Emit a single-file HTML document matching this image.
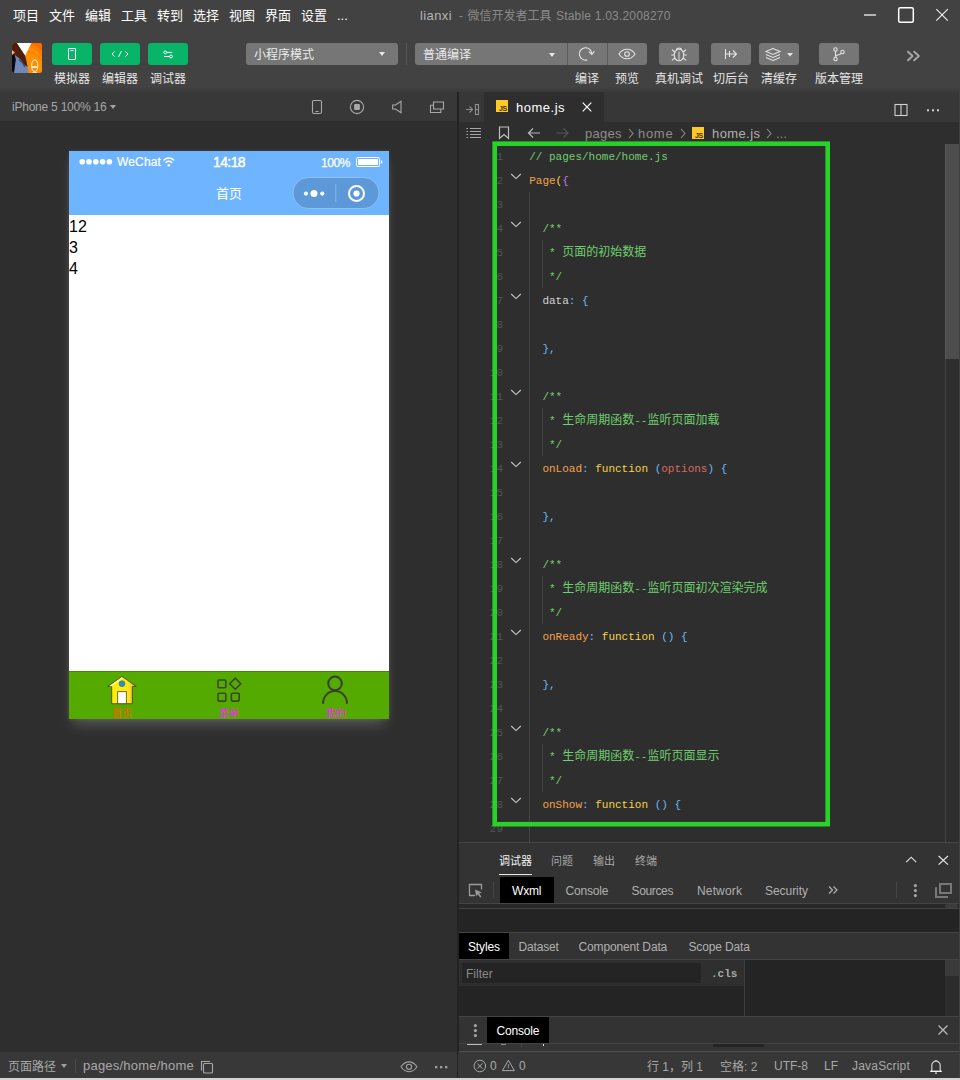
<!DOCTYPE html>
<html lang="zh-CN">
<head>
<meta charset="utf-8">
<title>微信开发者工具</title>
<style>
*{box-sizing:border-box;margin:0;padding:0}
html,body{width:960px;height:1080px;overflow:hidden;background:#2e2e2e}
body{position:relative;font-family:"Liberation Sans","Noto Sans CJK SC",sans-serif;font-size:12px;color:#ccc;-webkit-font-smoothing:antialiased}
.a{position:absolute;white-space:nowrap}
svg{position:absolute;overflow:visible}
/* ---------- top bar ---------- */
#top{left:0;top:0;width:960px;height:92px;background:#424242}
.menu{top:8px;font-size:13px;color:#fff;line-height:16px}
.gbtn{top:43px;width:40px;height:22px;background:#07b468;border-radius:3px}
.tbtn{top:43px;width:40px;height:22px;background:#767676;border-radius:3px}
.lbl{top:71px;font-size:12px;color:#e6e6e6;line-height:16px;text-align:center;width:60px}
/* ---------- simulator ---------- */
#simbar{left:0;top:92px;width:457px;height:29px;background:#383838}
#phone{left:69px;top:151px;width:320px;height:568px;background:#fff;box-shadow:0 0 4px rgba(255,255,255,.13),0 9px 13px -4px rgba(255,255,255,.21)}
#nav{left:0;top:0;width:320px;height:64px;background:#6eb4ff}
#tab{left:0;top:520px;width:320px;height:48px;background:#55aa00;border-top:1px solid #3f8a00}
/* ---------- editor ---------- */
#split{left:457px;top:92px;width:2px;height:960px;background:#232323}
.code{left:529.200px;margin-top:1px;font-family:"Liberation Mono","Noto Sans CJK SC",monospace;font-size:11px;line-height:24px;height:24px;white-space:pre;letter-spacing:0}
.code b{font-weight:normal;font-size:12px;font-family:"Liberation Sans","Noto Sans CJK SC",sans-serif;line-height:0;position:relative;top:0px}
.ln{left:470px;width:33px;margin-top:1px;text-align:right;font-family:"Liberation Mono",monospace;font-size:11px;line-height:24px;height:24px;color:#555}
.c{color:#6fce6f}.o{color:#f6a04a}.y{color:#f8d347}.b{color:#6dbaf4}.w{color:#d4d4d4}.r{color:#d9695f}.p{color:#c678dd}
</style>
</head>
<body>
<!-- TOP -->
<div id="top" class="a"></div>
<div class="a" style="left:0;top:87px;width:960px;height:5px;background:linear-gradient(#424242,#393939)"></div>
<span class="a menu" style="left:13px">项目</span>
<span class="a menu" style="left:49px">文件</span>
<span class="a menu" style="left:85px">编辑</span>
<span class="a menu" style="left:121px">工具</span>
<span class="a menu" style="left:157px">转到</span>
<span class="a menu" style="left:193px">选择</span>
<span class="a menu" style="left:229px">视图</span>
<span class="a menu" style="left:265px">界面</span>
<span class="a menu" style="left:301px">设置</span>
<span class="a menu" style="left:337px">...</span>
<span class="a" style="left:420px;top:8px;font-size:13px;line-height:16px;color:#b4b4b4;letter-spacing:.4px">lianxi</span><span class="a" style="left:459px;top:8px;font-size:12px;line-height:16px;color:#8a8a8a">-</span><span class="a" style="left:467.500px;top:8px;font-size:12px;line-height:16px;color:#8a8a8a">微信开发者工具</span><span class="a" style="left:556px;top:8px;font-size:12px;line-height:16px;color:#8a8a8a;letter-spacing:.2px">Stable 1.03.2008270</span>
<!-- window controls -->
<svg style="left:860px;top:0" width="100" height="30" viewBox="0 0 100 30" fill="none" stroke="#e8e8e8" stroke-width="1.3">
  <path d="M4 15h12" stroke="#b4b4b4" stroke-width="2"/>
  <rect x="38.7" y="7.7" width="14.6" height="14.6" rx="1.5" stroke="#fff" stroke-width="1.5"/>
  <path d="M76.3 9.2l11.5 11.5M87.800 9.2l-11.5 11.5" stroke-width="1.1" stroke="#f4f4f4"/>
</svg>
<!-- avatar -->
<svg style="left:12px;top:43px" width="30" height="30" viewBox="0 0 30 30">
  <defs><clipPath id="avc"><rect width="30" height="30" rx="2.5"/></clipPath></defs>
  <g clip-path="url(#avc)">
    <rect width="30" height="30" fill="#ff8e00"/>
    <path d="M19.400 0H30V9.500C27 4.500 23.500 2 19 1Z" fill="#ff6a00"/>
    <path d="M17.500 4.500C23 5.500 27 8.500 30 13.500V9.500C27 4.500 23.500 2 19 1Z" fill="#ff7e00"/>
    <path d="M16 8.500C22 9.500 26.500 12.500 30 18" stroke="#e86e00" stroke-width=".6" fill="none"/>
    <path d="M4.800 0H19.400L13.100 12.800Z" fill="#fff"/>
    <path d="M1.9 30V12.2h4.6l6.6.6 1 3.2 2.400 14Z" fill="#7088ba"/>
    <path d="M7 16.500c2.500 1.500 4.500 4 6 7.500" stroke="#3c527e" stroke-width="1.600" fill="none"/>
    <path d="M0 0H4.800L13.100 12.800l1.300 5.200 1.200 6-3.600-2.800C10 17.500 8 15.500 5.500 14L3 12H0Z" fill="#4e1f0f"/>
    <path d="M0 11.800H2.600l1.200 4.700L2 30H0Z" fill="#090916"/>
    <path d="M0 7l3 2.600L0 12Z" fill="#ffb468"/>
    <ellipse cx="22.700" cy="22.700" rx="3.100" ry="5.800" fill="none" stroke="#f6ecd8" stroke-width="1.100"/>
    <path d="M19.800 24h5.800" stroke="#fff" stroke-width="1.500"/>
    <path d="M20.500 29.600h4.500" stroke="#f2e6d4" stroke-width="1"/>
  </g>
</svg>
<!-- green buttons -->
<div class="a gbtn" style="left:52px"></div>
<div class="a gbtn" style="left:100px"></div>
<div class="a gbtn" style="left:148px"></div>
<svg style="left:52px;top:43px" width="136" height="22" viewBox="0 0 136 22" fill="none" stroke="#fff" stroke-width="1">
  <rect x="16.500" y="5.500" width="7" height="11" rx=".3"/><path d="M18.500 7.500h3"/>
  <path d="M62.500 8.500L60 11l2.500 2.500M73.500 8.500L76 11l-2.500 2.500M69.500 8l-3 6"/>
  <circle cx="113.200" cy="9.400" r="1.400"/><path d="M114.800 9.400h5.400"/>
  <circle cx="119" cy="13.500" r="1.400"/><path d="M112 13.500h5.500"/>
</svg>
<span class="a lbl" style="left:42px">模拟器</span>
<span class="a lbl" style="left:90px">编辑器</span>
<span class="a lbl" style="left:138px">调试器</span>
<!-- dropdowns -->
<div class="a" style="left:246px;top:43px;width:152px;height:22px;background:#767676;border-radius:3px"></div>
<span class="a" style="left:254px;top:47px;font-size:12px;line-height:16px;color:#ececec">小程序模式</span>
<div class="a" style="left:379px;top:52px;border:3px solid transparent;border-top:4px solid #e8e8e8;border-bottom:0"></div>
<div class="a" style="left:406px;top:43px;width:1px;height:22px;background:#575757"></div>
<div class="a" style="left:415px;top:43px;width:232px;height:22px;background:#767676;border-radius:3px"></div>
<div class="a" style="left:567px;top:43px;width:1px;height:22px;background:#5c5c5c"></div>
<div class="a" style="left:607px;top:43px;width:1px;height:22px;background:#5c5c5c"></div>
<span class="a" style="left:423px;top:47px;font-size:12px;line-height:16px;color:#ececec">普通编译</span>
<div class="a" style="left:548.500px;top:52.500px;border:3px solid transparent;border-top:4px solid #e8e8e8;border-bottom:0"></div>
<svg style="left:567px;top:43px" width="80" height="22" viewBox="0 0 80 22" fill="none" stroke="#e4e4e4" stroke-width="1.100">
  <path d="M20.200 16.900A6.200 6.200 0 1 1 24.800 10.900"/><path d="M21.800 8.600l3.100 2.800 2.500-3.200"/>
  <path d="M52 11c2-3.300 5-4.800 8-4.800s6 1.500 8 4.800c-2 3.300-5 4.800-8 4.800s-6-1.500-8-4.800Z"/><circle cx="60" cy="11" r="2.300"/>
</svg>
<span class="a lbl" style="left:557px">编译</span>
<span class="a lbl" style="left:597px">预览</span>
<!-- right tool buttons -->
<div class="a tbtn" style="left:659px"></div>
<div class="a tbtn" style="left:711px"></div>
<div class="a tbtn" style="left:759px"></div>
<div class="a tbtn" style="left:819px"></div>
<svg style="left:659px;top:43px" width="200" height="22" viewBox="0 0 200 22" fill="none" stroke="#e4e4e4" stroke-width="1.100">
  <ellipse cx="20" cy="12" rx="4.800" ry="5.800"/><path d="M17.300 7a2.800 2.800 0 0 1 5.400 0"/><path d="M20 8.500v9" stroke-opacity=".7" stroke-width="1.300"/><path d="M15.200 12h-3M24.800 12h3M15.800 9l-2.800-2.300M24.200 9l2.800-2.300M15.800 15l-2.800 2.300M24.200 15l2.800 2.300"/>
  <path d="M66.500 6v10M66.500 11h11M74 7.500l3.500 3.500-3.500 3.500M70.500 8v6" />
  <path d="M107 8.500l7-3 7 3-7 3zM107 11.500l7 3 7-3M107 14.500l7 3 7-3"/>
  <path d="M128 10l3 3.500 3-3.500z" fill="#e4e4e4" stroke="none"/>
  <circle cx="176.500" cy="6.500" r="1.700"/><circle cx="176.500" cy="16" r="1.700"/><circle cx="183.500" cy="9" r="1.700"/><path d="M176.500 8.200v6.100M176.500 14c0-3 5.300-1.500 5.800-3.800"/>
</svg>
<span class="a lbl" style="left:649px">真机调试</span>
<span class="a lbl" style="left:701px">切后台</span>
<span class="a lbl" style="left:749px">清缓存</span>
<span class="a lbl" style="left:809px">版本管理</span>
<svg style="left:905px;top:49px" width="16" height="14" viewBox="0 0 16 14" fill="none" stroke="#a6a6a6" stroke-width="2" stroke-linecap="round" stroke-linejoin="round"><path d="M3 2.700l4.600 4.300-4.600 4.300M9.200 2.700l4.600 4.300-4.600 4.300"/></svg>
<!-- SIM -->
<div id="simbar" class="a"></div>
<span class="a" style="left:12px;top:99px;font-size:12px;line-height:16px;color:#a6a6a6;letter-spacing:-.23px">iPhone 5 100% 16</span>
<div class="a" style="left:109.500px;top:105px;border:3px solid transparent;border-top:4px solid #a6a6a6;border-bottom:0"></div>
<svg style="left:300px;top:93px" width="157" height="28" viewBox="0 0 157 28" fill="none" stroke="#a8a8a8" stroke-width="1.100">
  <rect x="12.500" y="7.500" width="9" height="13" rx="1.500"/><path d="M15.500 18.500h3"/>
  <circle cx="57" cy="14" r="6.600"/><rect x="54.100" y="11.100" width="5.800" height="5.800" rx="1" fill="#a8a8a8" stroke="none"/>
  <path d="M92.700 12v4h2.800l5.500 3.800v-11.600l-5.500 3.800z"/>
  <path d="M133.500 9h10v7h-10zM133.500 12.300h-3v7.200h10.300v-3.500"/>
</svg>
<div id="phone" class="a">
  <div id="nav" class="a"></div>
  <svg style="left:0;top:0" width="320" height="64" viewBox="0 0 320 64">
    <g fill="#fff"><circle cx="13.200" cy="10.700" r="2.800"/><circle cx="20" cy="10.700" r="2.800"/><circle cx="26.800" cy="10.700" r="2.800"/><circle cx="33.600" cy="10.700" r="2.800"/><circle cx="40.400" cy="10.700" r="2.800"/></g>
    <g fill="none" stroke="#fff" stroke-width="1.500" stroke-linecap="round"><path d="M95 9a7 7 0 0 1 9.600 0"/><path d="M96.900 11.500a4.200 4.200 0 0 1 5.800 0"/></g>
    <circle cx="99.800" cy="14.200" r="1.300" fill="#fff"/>
    <rect x="287.500" y="6.500" width="23" height="9" rx="1.500" fill="none" stroke="#fff" stroke-width="1"/>
    <rect x="289" y="8" width="20" height="6" rx=".500" fill="#fff"/>
    <path d="M311.800 9.300v3.400a1.700 1.700 0 0 0 0-3.400z" fill="#fff"/>
    <rect x="224" y="26.500" width="86" height="31" rx="15.500" fill="rgba(0,0,0,.15)" stroke="rgba(255,255,255,.28)" stroke-width="1"/>
    <g fill="#fff"><circle cx="237" cy="42.600" r="2.100"/><circle cx="245" cy="42.600" r="3.500"/><circle cx="253.300" cy="42.600" r="2.100"/><circle cx="287.500" cy="42.500" r="3.100"/></g>
    <path d="M266.800 33v18" stroke="rgba(255,255,255,.3)" stroke-width="1"/>
    <circle cx="287.500" cy="42.500" r="7.500" fill="none" stroke="#fff" stroke-width="2"/>
  </svg>
  <span class="a" style="left:48px;top:3px;font-size:12px;line-height:16px;color:#fff;-webkit-text-stroke:.2px #fff;letter-spacing:.15px">WeChat</span>
  <span class="a" style="left:0;width:320px;text-align:center;top:3px;font-size:14px;line-height:16px;color:#fff;-webkit-text-stroke:.45px #fff;letter-spacing:-.6px">14:18</span>
  <span class="a" style="left:252px;top:4px;font-size:12px;line-height:16px;color:#fff;-webkit-text-stroke:.25px #fff;letter-spacing:-.45px">100%</span>
  <span class="a" style="left:0;width:320px;text-align:center;top:34px;font-size:13px;line-height:18px;color:#fff">首页</span>
  <span class="a" style="left:0;top:65px;font-size:16px;line-height:21px;color:#000">12</span>
  <span class="a" style="left:0;top:86px;font-size:16px;line-height:21px;color:#000">3</span>
  <span class="a" style="left:0;top:107px;font-size:16px;line-height:21px;color:#000">4</span>
  <div id="tab" class="a"></div>
  <svg style="left:0;top:520px" width="320" height="48" viewBox="0 0 320 48">
    <defs><linearGradient id="hg" x1="0" x2="1"><stop offset="0" stop-color="#fff000"/><stop offset=".7" stop-color="#ffe81a"/><stop offset="1" stop-color="#e8b840"/></linearGradient></defs>
    <!-- house -->
    <path d="M53 5.400L38.800 15.400h3.900v17.300h20.600V15.400h3.900z" fill="url(#hg)" stroke="#4a4a18" stroke-width=".9" stroke-linejoin="round"/>
    <path d="M53 6L40.500 15.200l2 .1L53 7.500z" fill="#fff" opacity=".85"/>
    <rect x="48.700" y="20.700" width="8.600" height="12" fill="#fff" stroke="#4a4a18" stroke-width=".8"/>
    <circle cx="53" cy="12.700" r="3" fill="#1e90e0" stroke="#6a6a20" stroke-width=".5"/>
    <!-- menu -->
    <g fill="none" stroke="#38472c" stroke-width="1.600" stroke-linejoin="round">
      <rect x="149" y="9" width="7.800" height="7.800" rx="1"/><rect x="149" y="22.300" width="7.800" height="7.800" rx="1"/><rect x="162.400" y="22.300" width="7.800" height="7.800" rx="1"/>
      <path d="M166.250 7.100l5.600 5.600-5.600 5.600-5.600-5.600z"/>
    </g>
    <!-- me -->
    <g fill="none" stroke="#38402f" stroke-width="2" stroke-linecap="round"><circle cx="266" cy="12.400" r="6.800"/><path d="M254.100 32a11.900 11.900 0 0 1 23.800 0"/></g>
  </svg>
  <span class="a" style="left:0;width:106.670px;text-align:center;top:37px;margin-top:520px;font-size:10px;line-height:12px;color:#ff5a00">首页</span>
  <span class="a" style="left:106.670px;width:106.670px;text-align:center;top:37px;margin-top:520px;font-size:10px;line-height:12px;color:#ff1aff">菜单</span>
  <span class="a" style="left:213.330px;width:106.670px;text-align:center;top:37px;margin-top:520px;font-size:10px;line-height:12px;color:#ff1aff">我的</span>
</div>
<!-- EDITOR -->
<div class="a" style="left:459px;top:92px;width:501px;height:30px;background:#373737"></div>
<div class="a" style="left:484px;top:92px;width:120px;height:30px;background:#2e2e2e"></div>
<div class="a" style="left:959px;top:122px;width:1px;height:720px;background:#3c3c3c"></div>
<svg style="left:459px;top:92px" width="25" height="30" viewBox="0 0 25 30" fill="none" stroke="#8e8e8e" stroke-width="1.100"><path d="M7 17.500h6.500M10.500 14.500l3 3-3 3"/><rect x="16.500" y="12.500" width="3" height="10"/><path d="M16.500 17.500h3"/></svg>
<div class="a" style="left:496px;top:100px;width:12px;height:12px;background:#ffca28"></div>
<span class="a" style="left:499px;top:104.500px;font-size:7px;line-height:8px;font-weight:bold;color:#3a3000;letter-spacing:-.3px">JS</span>
<span class="a" style="left:516px;top:100px;font-size:13px;line-height:16px;color:#fff;letter-spacing:.5px">home.js</span>
<svg style="left:581px;top:101px" width="12" height="12" viewBox="0 0 12 12" fill="none" stroke="#fff" stroke-width="1.200"><path d="M1.700 1.700l8.600 8.600M10.300 1.700l-8.600 8.600"/></svg>
<svg style="left:890px;top:100px" width="60" height="20" viewBox="0 0 60 20" fill="none" stroke="#d0d0d0" stroke-width="1.100"><rect x="5" y="4.500" width="12" height="11"/><path d="M11 4.500v11"/><g fill="#d0d0d0" stroke="none"><rect x="37" y="9.300" width="2" height="2"/><rect x="42" y="9.300" width="2" height="2"/><rect x="47" y="9.300" width="2" height="2"/></g></svg>
<svg style="left:459px;top:122px" width="120" height="22" viewBox="0 0 120 22" fill="none" stroke="#b0b0b0" stroke-width="1.100">
<g stroke="#a8a8a8"><path d="M11 6.500h11M11 9.500h11M11 12.500h11M11 15.500h11"/><path d="M7.500 6.500h1.500M7.500 9.500h1.500M7.500 12.500h1.500M7.500 15.500h1.500"/></g>
<path d="M40.500 5v11.500l4.500-4 4.500 4V5z" stroke="#c0c0c0" stroke-width="1.200"/>
<path d="M81 11h-11.500M74 6.500l-4.500 4.500 4.500 4.500" stroke="#b8b8b8" stroke-width="1.200"/>
<path d="M97.500 11h11.500M104.500 6.500l4.500 4.500-4.500 4.500" stroke="#555" stroke-width="1.200"/>
</svg>
<span class="a" style="left:585px;top:126px;font-size:13px;line-height:16px;color:#8c8c8c;letter-spacing:.3px">pages</span>
<span class="a" style="left:638px;top:126px;font-size:13px;line-height:16px;color:#8c8c8c;letter-spacing:.7px">home</span>
<span class="a" style="left:712px;top:126px;font-size:13px;line-height:16px;color:#b0b0b0;letter-spacing:.4px">home.js</span>
<span class="a" style="left:776px;top:126px;font-size:13px;line-height:16px;color:#8c8c8c">...</span>
<svg style="left:620px;top:122px" width="160" height="22" viewBox="0 0 160 22" fill="none" stroke="#8c8c8c" stroke-width="1.100"><path d="M9 7l4 4.500-4 4.500M61 7l4 4.500-4 4.500M147 7l4 4.500-4 4.500"/></svg>
<div class="a" style="left:692px;top:127px;width:12px;height:12px;background:#ffca28"></div>
<span class="a" style="left:695px;top:131.500px;font-size:7px;line-height:8px;font-weight:bold;color:#3a3000;letter-spacing:-.3px">JS</span>
<div class="a" style="left:529px;top:192px;width:1px;height:650px;background:#454545"></div>
<div class="a" style="left:542px;top:240px;width:1px;height:48px;background:#454545"></div>
<div class="a" style="left:542px;top:408px;width:1px;height:48px;background:#454545"></div>
<div class="a" style="left:542px;top:576px;width:1px;height:48px;background:#454545"></div>
<div class="a" style="left:542px;top:744px;width:1px;height:48px;background:#454545"></div>
<div class="a" style="left:945px;top:144px;width:1px;height:698px;background:#424242"></div>
<div class="a" style="left:945px;top:144px;width:14px;height:215px;background:#4d4d4d;border-left:1px solid #585858"></div>
<span class="a ln" style="top:144px">1</span>
<span class="a code" style="top:144px"><span class="c">// pages/home/home.js</span></span>
<span class="a ln" style="top:168px">2</span>
<span class="a code" style="top:168px"><span class="o">Page</span><span class="y">(</span><span class="p">{</span></span>
<svg style="left:510px;top:173px" width="12" height="8" viewBox="0 0 12 8" fill="none" stroke="#c8c8c8" stroke-width="1.050"><path d="M1.200 1l4.800 4.600 4.800-4.600"/></svg>
<span class="a ln" style="top:192px">3</span>
<span class="a ln" style="top:216px">4</span>
<span class="a code" style="top:216px">  <span class="c">/**</span></span>
<svg style="left:510px;top:221px" width="12" height="8" viewBox="0 0 12 8" fill="none" stroke="#c8c8c8" stroke-width="1.050"><path d="M1.200 1l4.800 4.600 4.800-4.600"/></svg>
<span class="a ln" style="top:240px">5</span>
<span class="a code" style="top:240px">   <span class="c">* <b>页面的初始数据</b></span></span>
<span class="a ln" style="top:264px">6</span>
<span class="a code" style="top:264px">   <span class="c">*/</span></span>
<span class="a ln" style="top:288px">7</span>
<span class="a code" style="top:288px">  <span class="w">data</span><span class="b">: {</span></span>
<svg style="left:510px;top:293px" width="12" height="8" viewBox="0 0 12 8" fill="none" stroke="#c8c8c8" stroke-width="1.050"><path d="M1.200 1l4.800 4.600 4.800-4.600"/></svg>
<span class="a ln" style="top:312px">8</span>
<span class="a ln" style="top:336px">9</span>
<span class="a code" style="top:336px">  <span class="b">},</span></span>
<span class="a ln" style="top:360px">10</span>
<span class="a ln" style="top:384px">11</span>
<span class="a code" style="top:384px">  <span class="c">/**</span></span>
<svg style="left:510px;top:389px" width="12" height="8" viewBox="0 0 12 8" fill="none" stroke="#c8c8c8" stroke-width="1.050"><path d="M1.200 1l4.800 4.600 4.800-4.600"/></svg>
<span class="a ln" style="top:408px">12</span>
<span class="a code" style="top:408px">   <span class="c">* <b>生命周期函数</b>--<b>监听页面加载</b></span></span>
<span class="a ln" style="top:432px">13</span>
<span class="a code" style="top:432px">   <span class="c">*/</span></span>
<span class="a ln" style="top:456px">14</span>
<span class="a code" style="top:456px">  <span class="o">onLoad</span><span class="b">: </span><span class="y">function</span> <span class="b">(</span><span class="r">options</span><span class="b">) {</span></span>
<svg style="left:510px;top:461px" width="12" height="8" viewBox="0 0 12 8" fill="none" stroke="#c8c8c8" stroke-width="1.050"><path d="M1.200 1l4.800 4.600 4.800-4.600"/></svg>
<span class="a ln" style="top:480px">15</span>
<span class="a ln" style="top:504px">16</span>
<span class="a code" style="top:504px">  <span class="b">},</span></span>
<span class="a ln" style="top:528px">17</span>
<span class="a ln" style="top:552px">18</span>
<span class="a code" style="top:552px">  <span class="c">/**</span></span>
<svg style="left:510px;top:557px" width="12" height="8" viewBox="0 0 12 8" fill="none" stroke="#c8c8c8" stroke-width="1.050"><path d="M1.200 1l4.800 4.600 4.800-4.600"/></svg>
<span class="a ln" style="top:576px">19</span>
<span class="a code" style="top:576px">   <span class="c">* <b>生命周期函数</b>--<b>监听页面初次渲染完成</b></span></span>
<span class="a ln" style="top:600px">20</span>
<span class="a code" style="top:600px">   <span class="c">*/</span></span>
<span class="a ln" style="top:624px">21</span>
<span class="a code" style="top:624px">  <span class="o">onReady</span><span class="b">: </span><span class="y">function</span> <span class="b">() {</span></span>
<svg style="left:510px;top:629px" width="12" height="8" viewBox="0 0 12 8" fill="none" stroke="#c8c8c8" stroke-width="1.050"><path d="M1.200 1l4.800 4.600 4.800-4.600"/></svg>
<span class="a ln" style="top:648px">22</span>
<span class="a ln" style="top:672px">23</span>
<span class="a code" style="top:672px">  <span class="b">},</span></span>
<span class="a ln" style="top:696px">24</span>
<span class="a ln" style="top:720px">25</span>
<span class="a code" style="top:720px">  <span class="c">/**</span></span>
<svg style="left:510px;top:725px" width="12" height="8" viewBox="0 0 12 8" fill="none" stroke="#c8c8c8" stroke-width="1.050"><path d="M1.200 1l4.800 4.600 4.800-4.600"/></svg>
<span class="a ln" style="top:744px">26</span>
<span class="a code" style="top:744px">   <span class="c">* <b>生命周期函数</b>--<b>监听页面显示</b></span></span>
<span class="a ln" style="top:768px">27</span>
<span class="a code" style="top:768px">   <span class="c">*/</span></span>
<span class="a ln" style="top:792px">28</span>
<span class="a code" style="top:792px">  <span class="o">onShow</span><span class="b">: </span><span class="y">function</span> <span class="b">() {</span></span>
<svg style="left:510px;top:797px" width="12" height="8" viewBox="0 0 12 8" fill="none" stroke="#c8c8c8" stroke-width="1.050"><path d="M1.200 1l4.800 4.600 4.800-4.600"/></svg>
<span class="a ln" style="top:816px">29</span>
<svg style="left:0;top:0" width="960" height="1080" viewBox="0 0 960 1080" fill="none"><rect x="494.700" y="143.700" width="333" height="680.500" stroke="#28d228" stroke-width="4.600"/></svg>
<div class="a" style="left:459px;top:842px;width:501px;height:1px;background:#454545"></div>
<!-- DEBUGGER -->
<div class="a" style="left:459px;top:843px;width:501px;height:32px;background:#333"></div>
<div class="a" style="left:459px;top:875px;width:501px;height:29px;background:#333;border-bottom:1px solid #444"></div>
<div class="a" style="left:459px;top:904px;width:501px;height:4px;background:#282828"></div>
<div class="a" style="left:459px;top:908px;width:501px;height:1px;background:#444"></div>
<div class="a" style="left:459px;top:909px;width:501px;height:23px;background:#242424"></div>
<div class="a" style="left:945px;top:904px;width:13px;height:4px;background:#3c3c3c;border-radius:2px"></div>
<div class="a" style="left:459px;top:932px;width:501px;height:1px;background:#444"></div>
<div class="a" style="left:459px;top:933px;width:501px;height:26px;background:#333"></div>
<div class="a" style="left:459px;top:959px;width:501px;height:1px;background:#444"></div>
<div class="a" style="left:459px;top:960px;width:501px;height:56px;background:#242424"></div>
<div class="a" style="left:459px;top:960px;width:285px;height:26px;background:#2f2f2f"></div>
<div class="a" style="left:462px;top:963px;width:239px;height:20px;background:#242424"></div>
<div class="a" style="left:744px;top:960px;width:1px;height:56px;background:#3e3e3e"></div>
<div class="a" style="left:945px;top:960px;width:14px;height:56px;background:#2c2c2c"></div>
<div class="a" style="left:945px;top:960px;width:14px;height:16px;background:#3a3a3a"></div>
<div class="a" style="left:459px;top:1016px;width:501px;height:1px;background:#444"></div>
<div class="a" style="left:459px;top:1017px;width:501px;height:26px;background:#333"></div>
<div class="a" style="left:459px;top:1043px;width:501px;height:1px;background:#444"></div>
<div class="a" style="left:459px;top:1044px;width:501px;height:7px;background:#343434"></div><div class="a" style="left:467px;top:1044px;width:15px;height:1px;background:#bcbcbc"></div><div class="a" style="left:501px;top:1044px;width:5px;height:1px;background:#8a8a8a"></div><div class="a" style="left:543px;top:1044px;width:1px;height:2px;background:#e0e0e0"></div><div class="a" style="left:521px;top:1044px;width:1px;height:3px;background:#454545"></div>
<div class="a" style="left:713px;top:1044px;width:51px;height:3px;background:#242424"></div>
<div class="a" style="left:459px;top:1051px;width:501px;height:1px;background:#505050"></div>
<span class="a" style="left:499px;top:853px;font-size:11px;line-height:16px;color:#f0f0f0">调试器</span>
<span class="a" style="left:551px;top:853px;font-size:11px;line-height:16px;color:#a8a8a8">问题</span>
<span class="a" style="left:593px;top:853px;font-size:11px;line-height:16px;color:#a8a8a8">输出</span>
<span class="a" style="left:635px;top:853px;font-size:11px;line-height:16px;color:#a8a8a8">终端</span>
<div class="a" style="left:499px;top:874px;width:33px;height:1px;background:#e8e8e8"></div>
<svg style="left:900px;top:850px" width="56" height="20" viewBox="0 0 56 20" fill="none" stroke="#e6e6e6" stroke-width="1.150"><path d="M6.200 12.200l5-5 5 5"/><path d="M38.600 6l9.400 8.600M48 6l-9.400 8.600"/></svg>
<svg style="left:467px;top:882px" width="18" height="18" viewBox="0 0 18 18" fill="none" stroke="#9a9a9a" stroke-width="1.300"><path d="M8 13.500h-5.500v-11h12v5"/><path d="M8 7.500l7 3-3 1 2.500 3-1.300 1-2.400-3.100L9 14z" fill="#9a9a9a" stroke="none"/></svg>
<div class="a" style="left:493px;top:882px;width:1px;height:16px;background:#454545"></div>
<div class="a" style="left:500px;top:877px;width:54px;height:26px;background:#000"></div>
<span class="a" style="left:512px;top:883px;font-size:12px;line-height:16px;letter-spacing:-.2px;color:#fff">Wxml</span>
<span class="a" style="left:565.500px;top:883px;font-size:12px;line-height:16px;letter-spacing:-.2px;color:#b0b0b0">Console</span>
<span class="a" style="left:631.500px;top:883px;font-size:12px;line-height:16px;letter-spacing:-.35px;color:#b0b0b0">Sources</span>
<span class="a" style="left:697px;top:883px;font-size:12px;line-height:16px;letter-spacing:.15px;color:#b0b0b0">Network</span>
<span class="a" style="left:765px;top:883px;font-size:12px;line-height:16px;letter-spacing:-.05px;color:#b0b0b0">Security</span>
<svg style="left:826px;top:883px" width="14" height="14" viewBox="0 0 14 14" fill="none" stroke="#b0b0b0" stroke-width="1.200"><path d="M3 3.500L6.500 7 3 10.500M7.500 3.500L11 7 7.500 10.500"/></svg>
<div class="a" style="left:896px;top:882px;width:1px;height:16px;background:#454545"></div>
<svg style="left:905px;top:880px" width="52" height="20" viewBox="0 0 52 20"><g fill="#a4a4a4"><circle cx="10.400" cy="5.600" r="1.600"/><circle cx="10.400" cy="10.600" r="1.600"/><circle cx="10.400" cy="15.600" r="1.600"/></g><path d="M35 4h11v9h-11z" fill="none" stroke="#787878" stroke-width="2"/><path d="M31 7.300v9.700h12" fill="none" stroke="#787878" stroke-width="2"/></svg>
<div class="a" style="left:459px;top:933px;width:50px;height:26px;background:#000"></div>
<span class="a" style="left:468px;top:939px;font-size:12px;line-height:16px;letter-spacing:-.15px;color:#fff">Styles</span>
<span class="a" style="left:518.500px;top:939px;font-size:12px;line-height:16px;letter-spacing:-.15px;color:#b0b0b0">Dataset</span>
<span class="a" style="left:578.500px;top:939px;font-size:12px;line-height:16px;letter-spacing:-.15px;color:#b0b0b0">Component Data</span>
<span class="a" style="left:688.500px;top:939px;font-size:12px;line-height:16px;letter-spacing:-.15px;color:#b0b0b0">Scope Data</span>
<span class="a" style="left:466px;top:966px;font-size:12px;line-height:16px;color:#8a8a8a">Filter</span>
<span class="a" style="left:711px;top:966px;font-family:'Liberation Mono',monospace;font-weight:bold;font-size:11px;line-height:16px;color:#a8a8a8">.cls</span>
<svg style="left:468px;top:1020px" width="14" height="20" viewBox="0 0 14 20"><g fill="#a4a4a4"><circle cx="7.400" cy="5.600" r="1.600"/><circle cx="7.400" cy="10.600" r="1.600"/><circle cx="7.400" cy="15.600" r="1.600"/></g></svg>
<div class="a" style="left:487px;top:1017px;width:62px;height:26px;background:#000"></div>
<span class="a" style="left:496.500px;top:1023px;font-size:12px;line-height:16px;letter-spacing:-.2px;color:#fff">Console</span>
<svg style="left:936px;top:1023px" width="14" height="14" viewBox="0 0 14 14" fill="none" stroke="#b8b8b8" stroke-width="1.300"><path d="M2.500 2.500l9 9M11.500 2.500l-9 9"/></svg>
<div class="a" style="left:0;top:1052px;width:457px;height:26px;background:#383838"></div>
<div class="a" style="left:458px;top:1052px;width:502px;height:26px;background:#373737"></div>
<div class="a" style="left:0;top:1078px;width:960px;height:2px;background:#d4d4d4"></div>
<span class="a" style="left:8px;top:1059px;font-size:12px;line-height:16px;color:#a8a8a8">页面路径</span>
<div class="a" style="left:61px;top:1064px;border:3px solid transparent;border-top:4px solid #a0a0a0;border-bottom:0"></div>
<div class="a" style="left:75px;top:1059px;width:1px;height:14px;background:#4a4a4a"></div>
<span class="a" style="left:83px;top:1058px;font-size:13px;line-height:16px;color:#a8a8a8;letter-spacing:.22px">pages/home/home</span>
<svg style="left:199px;top:1058.8px" width="16" height="16" viewBox="0 0 16 16" fill="none" stroke="#a8a8a8" stroke-width="1.100"><rect x="4.500" y="4.500" width="9" height="9.500" rx="1"/><path d="M2.500 11.500v-9h8.500"/></svg>
<svg style="left:399px;top:1058px" width="50" height="16" viewBox="0 0 50 16" fill="none" stroke="#a0a0a0" stroke-width="1.100"><path d="M2 8.800c2.200-3.300 5-4.900 8-4.900s5.800 1.600 8 4.900c-2.200 3.300-5 4.900-8 4.900s-5.800-1.600-8-4.900z"/><circle cx="10" cy="8.800" r="2.600"/><g fill="#a0a0a0" stroke="none"><rect x="36" y="8" width="2.300" height="2.300"/><rect x="41" y="8" width="2.300" height="2.300"/><rect x="46" y="8" width="2.300" height="2.300"/></g></svg>
<svg style="left:472px;top:1058px" width="44" height="16" viewBox="0 0 44 16" fill="none" stroke="#a8a8a8" stroke-width="1"><circle cx="7.800" cy="8" r="5.800"/><path d="M5.300 5.500l5 5M10.300 5.500l-5 5"/><path d="M36.400 2.300l6 10.300h-12z"/><path d="M36.400 6v4.500" stroke-opacity=".8"/></svg>
<span class="a" style="left:490px;top:1058px;font-size:12px;line-height:16px;color:#a8a8a8">0</span>
<span class="a" style="left:519px;top:1058px;font-size:12px;line-height:16px;color:#a8a8a8">0</span>
<span class="a" style="left:647px;top:1059px;font-size:12px;line-height:16px;color:#a8a8a8">行 1，列 1</span>
<span class="a" style="left:720px;top:1059px;font-size:12px;line-height:16px;color:#a8a8a8">空格: 2</span>
<span class="a" style="left:774px;top:1058px;font-size:12px;line-height:16px;color:#a8a8a8">UTF-8</span>
<span class="a" style="left:824px;top:1058px;font-size:12px;line-height:16px;color:#a8a8a8">LF</span>
<span class="a" style="left:852px;top:1058px;font-size:12px;line-height:16px;color:#a8a8a8;letter-spacing:.2px">JavaScript</span>
<svg style="left:928px;top:1057px" width="16" height="18" viewBox="0 0 16 18" fill="none" stroke="#d0d0d0" stroke-width="1.200"><path d="M3.800 14v-5.600a4.200 4.200 0 0 1 8.400 0v5.600"/><path d="M2.200 14.300h11.600" stroke="#fff" stroke-width="1.300"/><path d="M7 16.200h2M7.400 3.500h1.200" stroke="#e0e0e0"/></svg>
<div id="split" class="a"></div><div class="a" style="left:457px;top:1052px;width:1px;height:26px;background:#232323"></div>
<div class="a" style="left:959px;top:92px;width:1px;height:986px;background:#404040"></div>
</body>
</html>
